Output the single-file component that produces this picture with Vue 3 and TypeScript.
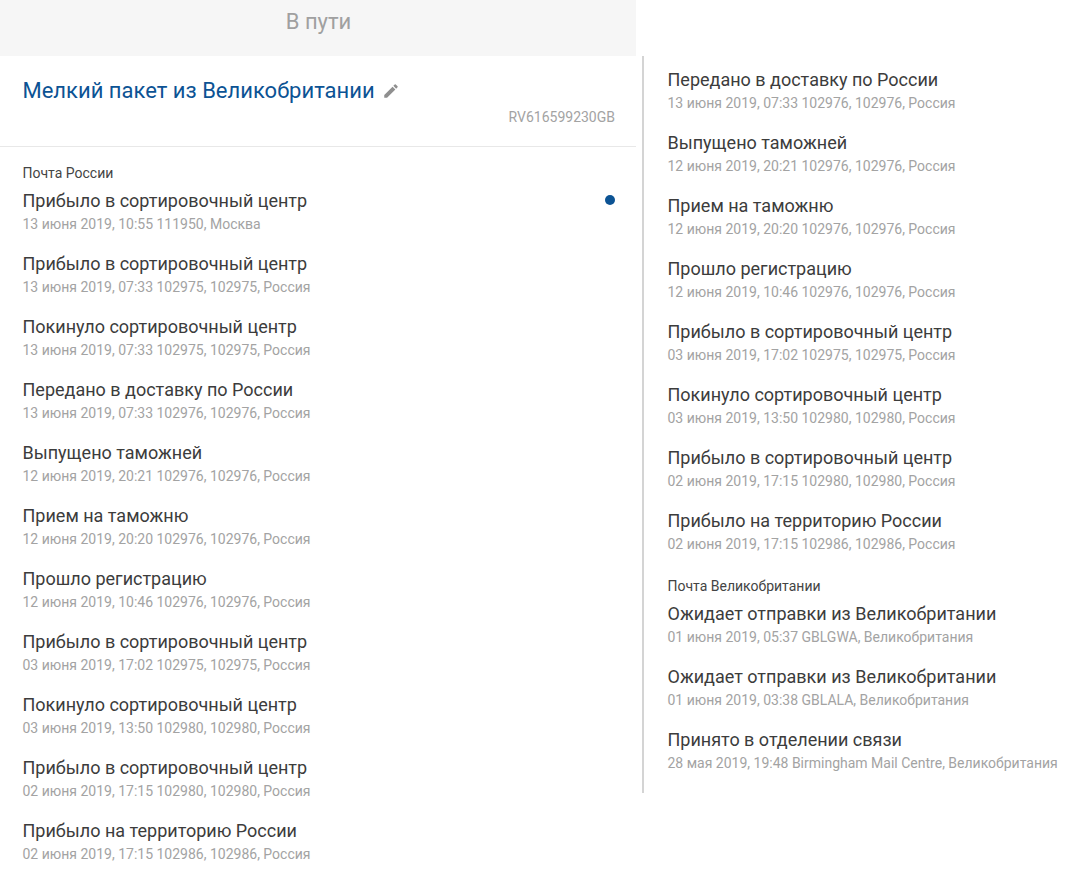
<script setup lang="ts">
interface Row { t: string; m: string }
const PR = 'Прибыло в сортировочный центр'
const L = 'Покинуло сортировочный центр'
const left: Row[] = [
  { t: PR, m: '13 июня 2019, 10:55 111950, Москва' },
  { t: PR, m: '13 июня 2019, 07:33 102975, 102975, Россия' },
  { t: L, m: '13 июня 2019, 07:33 102975, 102975, Россия' },
  { t: 'Передано в доставку по России', m: '13 июня 2019, 07:33 102976, 102976, Россия' },
  { t: 'Выпущено таможней', m: '12 июня 2019, 20:21 102976, 102976, Россия' },
  { t: 'Прием на таможню', m: '12 июня 2019, 20:20 102976, 102976, Россия' },
  { t: 'Прошло регистрацию', m: '12 июня 2019, 10:46 102976, 102976, Россия' },
  { t: PR, m: '03 июня 2019, 17:02 102975, 102975, Россия' },
  { t: L, m: '03 июня 2019, 13:50 102980, 102980, Россия' },
  { t: PR, m: '02 июня 2019, 17:15 102980, 102980, Россия' },
  { t: 'Прибыло на территорию России', m: '02 июня 2019, 17:15 102986, 102986, Россия' },
]
const right: Row[] = left.slice(3)
const uk: Row[] = [
  { t: 'Ожидает отправки из Великобритании', m: '01 июня 2019, 05:37 GBLGWA, Великобритания' },
  { t: 'Ожидает отправки из Великобритании', m: '01 июня 2019, 03:38 GBLALA, Великобритания' },
  { t: 'Принято в отделении связи', m: '28 мая 2019, 19:48 Birmingham Mail Centre, Великобритания' },
]
</script>

<template>
  <div class="page">
    <section class="left">
      <header class="status">В пути</header>
      <div class="info">
        <div class="name">
          <span>Мелкий пакет из Великобритании</span>
          <svg class="pencil" viewBox="0 0 24 24" width="18" height="18" aria-hidden="true">
            <path d="M3 17.25V21h3.75L17.81 9.94l-3.75-3.75L3 17.25zM20.71 7.04a1 1 0 0 0 0-1.41l-2.34-2.34a1 1 0 0 0-1.41 0l-1.83 1.83 3.75 3.75 1.83-1.83z" />
          </svg>
        </div>
        <div class="code">RV616599230GB</div>
      </div>
      <div class="list">
        <div class="carrier carrier-first">Почта России</div>
        <div v-for="(r, i) in left" :key="i" class="row">
          <div class="title">{{ r.t }}</div>
          <div class="meta">{{ r.m }}</div>
          <span v-if="i === 0" class="dot"></span>
        </div>
      </div>
    </section>
    <section class="right">
      <div v-for="(r, i) in right" :key="'r' + i" class="row">
        <div class="title">{{ r.t }}</div>
        <div class="meta">{{ r.m }}</div>
      </div>
      <div class="carrier">Почта Великобритании</div>
      <div v-for="(r, i) in uk" :key="'u' + i" class="row">
        <div class="title">{{ r.t }}</div>
        <div class="meta">{{ r.m }}</div>
      </div>
    </section>
  </div>
</template>

<style>
html, body { margin: 0; background: #fff; overflow: hidden; }
</style>

<style scoped>
.page {
  display: flex;
  align-items: flex-start;
  height: 886px;
  overflow: hidden;
  font-family: Roboto, "Liberation Sans", sans-serif;
  color: #3c3c3c;
}
.left { width: 636px; flex: none; }
.status {
  height: 56px;
  line-height: 44px;
  text-align: center;
  background: #f6f6f6;
  color: #a0a0a0;
  font-size: 22px;
  padding-left: 1px;
  box-sizing: border-box;
}
.info {
  height: 90px;
  padding: 0 21px 0 22.5px;
  border-bottom: 1px solid #e8e8e8;
}
.name {
  display: flex;
  align-items: center;
  gap: 7px;
  padding-top: 20px;
  height: 30px;
  line-height: 30px;
  font-size: 22px;
  color: #0c5394;
}
.pencil { fill: #8f8f8f; }
.code {
  margin-top: 1px;
  text-align: right;
  font-size: 14px;
  line-height: 20px;
  color: #a3a3a3;
}
.list { padding: 0 21px 0 22.5px; }
.carrier {
  margin: 5px 0 7px;
  height: 18px;
  line-height: 18px;
  font-size: 14px;
  color: #444;
}
.carrier-first { margin-top: 17px; }
.row { position: relative; height: 63px; }
.title {
  height: 24px;
  line-height: 24px;
  font-size: 18px;
  color: #3c3c3c;
  white-space: nowrap;
}
.meta {
  height: 22px;
  line-height: 22px;
  font-size: 14px;
  color: #a3a3a3;
  white-space: nowrap;
}
.dot {
  position: absolute;
  right: 0;
  top: 6px;
  width: 10px;
  height: 10px;
  border-radius: 50%;
  background: #0c5394;
}
.right {
  margin: 56px 0 0 6px;
  height: 737px;
  box-sizing: border-box;
  padding: 12px 0 0 23.5px;
  border-left: 2px solid #d4d4d4;
  flex: 1;
  min-width: 0;
}
</style>
